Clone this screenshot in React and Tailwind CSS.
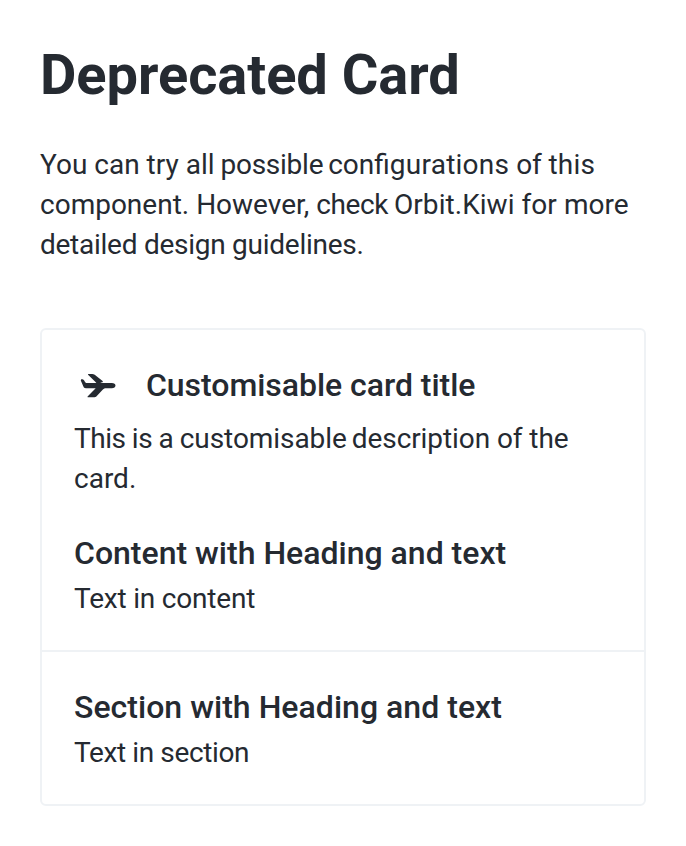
export default function App() {
  return (
    <main className="h-[846px] w-[686px] bg-white px-10 pt-10 font-['Roboto',sans-serif] text-[28px] leading-10 text-[#252a31]">
      <h1 className="pt-[3px] text-[56px] leading-[64px] font-bold tracking-[-0.04px]">Deprecated Card</h1>
      <p className="mt-[38px] whitespace-nowrap">
        <span className="block">You can try all <span className="ml-[-1px] tracking-[-0.25px]">possible</span> <span className="ml-[-2px]">confi<span className="tracking-[0.25px]">gurations</span></span> <span className="tracking-[-0.2px]">of</span> <span className="tracking-[0.2px]">this</span></span>
        <span className="block">component. However, <span className="tracking-[-0.4px]">check</span> <span className="ml-[-1px] tracking-[0.05px]">Orbit.Kiwi for more</span></span>
        <span className="block tracking-[-0.26px]">detailed design guidelines.</span>
      </p>
      <section className="mt-[63px] h-[478px] rounded-[6px] border-2 border-[#eff2f5]">
        <div className="h-[322px] border-b-2 border-[#eff2f5] px-8 pt-[31px]">
          <div className="flex h-12 items-center">
            <svg viewBox="0 0 48 48" className="mt-[2px] h-12 w-12" fill="currentColor">
              <path d="M7 18.9c-.5-1.3.2-1.9 1.3-1.6 1.3.2 1.8.9 2.3 1.9.6 1.2 1 1.8 2.5 1.8h24.7c2.3 0 3.7.9 3.7 2.4s-1.4 2.8-3.7 2.8H32.2c-1.5 0-2.4.4-3.3 1.3l-6.1 6.4c-1 1-1.8 1.4-3.2 1.4h-5.3c-.9 0-1.1-.6-.5-1.1l7.9-8h-9.8c-1.5 0-2.1-.4-2.5-1.6z" />
              <path d="M14.8 12.1h3.3c1 0 1.8.2 2.6.7l7.6 5.9c.8.6.8 1.6-.3 1.6l-1.8.7h-3.8l-1.4-1.6-6.7-6.3c-.6-.5-.3-1 .5-1z" />
            </svg>
            <h2 className="ml-6 text-[32px] font-medium tracking-[-0.04px]">Customisable card title</h2>
          </div>
          <p className="mt-[10px] whitespace-nowrap"><span className="tracking-[-0.5px]">This is a </span><span className="tracking-[-0.06px]">customisable</span> <span className="ml-[-2px] tracking-[-0.08px]">description of the</span><br />card.</p>
          <h2 className="mt-[34px] text-[32px] font-medium">Content with Heading and text</h2>
          <p className="mt-[6px] tracking-[-0.2px]">Text in content</p>
        </div>
        <div className="px-8 pt-[35px]">
          <h2 className="text-[32px] font-medium tracking-[0.03px]">Section with Heading and text</h2>
          <p className="mt-[6px] tracking-[-0.38px]">Text in section</p>
        </div>
      </section>
    </main>
  );
}
